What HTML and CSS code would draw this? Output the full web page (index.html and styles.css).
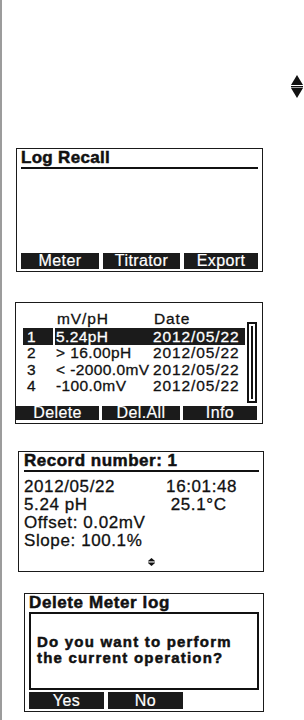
FILE: index.html
```html
<!DOCTYPE html>
<html lang="en">
<head>
  <meta charset="UTF-8">
  <meta name="viewport" content="width=device-width, initial-scale=1.0">
  <title>Log Recall screens</title>
  <link rel="stylesheet" href="styles.css">
</head>
<body>
  <div class="page">
    <!-- Up/down hint -->
    <div class="scroll-hint">
      <svg width="12" height="23" viewBox="0 0 12 23">
        <path d="M6 0 L12 10 L0 10 Z"/>
        <rect x="0" y="11" width="12" height="1.4"/>
        <path d="M0 13 L12 13 L6 23 Z"/>
      </svg>
    </div>

    <!-- Log Recall menu -->
    <section class="lcd lcd-menu">
      <h2 class="lcd-title">Log Recall</h2>
      <div class="softkeys">
        <span>Meter</span>
        <span>Titrator</span>
        <span>Export</span>
      </div>
    </section>

    <!-- Meter log list -->
    <section class="lcd lcd-list">
      <div class="list-body">
        <div class="log-list">
          <div class="log-head">
            <span class="col-val">mV/pH</span>
            <span class="col-date">Date</span>
          </div>
          <div class="log-row selected">
            <span class="col-no">1</span>
            <span class="col-main"><span class="col-val">5.24pH</span><span class="col-date">2012/05/22</span></span>
          </div>
          <div class="log-row">
            <span class="col-no">2</span>
            <span class="col-main"><span class="col-val">&gt; 16.00pH</span><span class="col-date">2012/05/22</span></span>
          </div>
          <div class="log-row">
            <span class="col-no">3</span>
            <span class="col-main"><span class="col-val">&lt; -2000.0mV</span><span class="col-date">2012/05/22</span></span>
          </div>
          <div class="log-row">
            <span class="col-no">4</span>
            <span class="col-main"><span class="col-val">-100.0mV</span><span class="col-date">2012/05/22</span></span>
          </div>
        </div>
        <div class="scrollbar"><div class="thumb"></div></div>
      </div>
      <div class="softkeys softkeys-list">
        <span>Delete</span>
        <span>Del.All</span>
        <span>Info</span>
      </div>
    </section>

    <!-- Record detail -->
    <section class="lcd lcd-record">
      <h2 class="lcd-title">Record number: 1</h2>
      <div class="record-lines">
        <div class="record-line"><span>2012/05/22</span><span class="right-a">16:01:48</span></div>
        <div class="record-line"><span>5.24 pH</span><span class="right-b">25.1°C</span></div>
        <div class="record-line"><span>Offset: 0.02mV</span></div>
        <div class="record-line"><span>Slope: 100.1%</span></div>
      </div>
      <div class="record-hint">
        <svg width="7" height="8" viewBox="0 0 7 8">
          <path d="M3.5 0 L7 3 L0 3 Z"/>
          <rect x="0" y="3.6" width="7" height="0.9"/>
          <path d="M0 5 L7 5 L3.5 8 Z"/>
        </svg>
      </div>
    </section>

    <!-- Delete confirmation -->
    <section class="lcd lcd-dialog">
      <h2 class="lcd-title plain">Delete Meter log</h2>
      <div class="dialog-box">
        <p class="dialog-line">Do you want to perform</p>
        <p class="dialog-line">the current operation?</p>
      </div>
      <div class="softkeys softkeys-dialog">
        <span>Yes</span>
        <span>No</span>
      </div>
    </section>
  </div>
</body>
</html>
```

FILE: styles.css
```css
body {
  margin: 0;
  background: #fff;
  color: #111;
  font-family: "Liberation Sans", Arial, sans-serif;
}

.page {
  box-sizing: border-box;
  min-height: 720px;
  border-left: 2px solid #9c9c9c;
}

.scroll-hint {
  display: flex;
  justify-content: flex-end;
  height: 73px;
  padding-top: 75px;
  padding-right: 1px;
}

.scroll-hint svg,
.record-hint svg {
  fill: #111;
}

/* Generic LCD screen frame */
.lcd {
  box-sizing: border-box;
  display: flex;
  flex-direction: column;
  border: 1px solid #1a1a1a;
  font-size: 17px;
  letter-spacing: 0.2px;
  -webkit-text-stroke: 0.3px currentColor;
}

.lcd-title {
  margin: 0;
  font-size: 17px;
  font-weight: bold;
  line-height: 18px;
  letter-spacing: 0.3px;
  border-bottom: 2px solid #111;
  -webkit-text-stroke: 0.5px currentColor;
}

.lcd-title.plain {
  border-bottom: none;
}

.softkeys {
  display: grid;
  grid-template-columns: 78px 77px 74px;
  gap: 4px;
  margin-top: auto;
  margin-bottom: 2px;
}

.softkeys span {
  background: #1b1b1b;
  color: #fff;
  text-align: center;
  font-size: 16px;
  line-height: 16px;
  letter-spacing: 0.4px;
  -webkit-text-stroke: 0.2px currentColor;
}

/* Screen 1 */
.lcd-menu {
  width: 247px;
  height: 124px;
  margin-left: 14px;
  padding: 0 4px;
}

/* Screen 2 */
.lcd-list {
  width: 248px;
  height: 122px;
  margin-top: 30px;
  margin-left: 13px;
  padding: 7px 4px 0 0;
}

.list-body {
  display: flex;
  gap: 2px;
  padding-left: 7px;
}

.log-list {
  width: 222px;
  font-size: 15.5px;
  letter-spacing: 0.9px;
}

.log-head {
  display: flex;
  line-height: 18px;
  padding-left: 34px;
}

.log-head .col-val {
  width: 97px;
}

.log-row {
  display: grid;
  grid-template-columns: 30px 190px;
  gap: 2px;
  line-height: 16.5px;
}

.log-row.selected {
  line-height: 17px;
  color: #fff;
}

.log-row.selected .col-no,
.log-row.selected .col-main {
  background: #1b1b1b;
}

.col-no {
  padding-left: 4px;
}

.col-main {
  display: flex;
  padding-left: 1px;
}

.col-main .col-val {
  width: 97px;
  white-space: nowrap;
  letter-spacing: 0.4px;
}

.scrollbar {
  box-sizing: border-box;
  width: 10px;
  height: 81px;
  margin-top: 12px;
  padding: 2px;
  border: 2px solid #111;
}

.thumb {
  height: 100%;
  background: #111;
}

.softkeys-list {
  grid-template-columns: 83px 78px 74px;
  gap: 3px;
  margin-bottom: 3px;
}

.softkeys-list span {
  line-height: 14px;
}

/* Screen 3 */
.lcd-record {
  width: 246px;
  height: 121px;
  margin-top: 27px;
  margin-left: 16px;
  padding: 0 4px 0 5px;
}

.lcd-record .lcd-title {
  letter-spacing: 0.5px;
}

.lcd-title + .record-lines {
  margin-top: 6px;
}

.record-lines {
  letter-spacing: 0.6px;
}

.record-line {
  display: flex;
  line-height: 18px;
}

.record-line .right-a {
  margin-left: 51px;
}

.record-line .right-b {
  margin-left: 83px;
}

.record-hint {
  display: flex;
  justify-content: center;
  margin-top: 8px;
  padding-left: 19px;
}

/* Screen 4 */
.lcd-dialog {
  width: 240px;
  height: 119px;
  margin-top: 21px;
  margin-left: 22px;
  padding: 0 4px;
}

.lcd-dialog .lcd-title {
  letter-spacing: 0.6px;
}

.dialog-box {
  box-sizing: border-box;
  height: 78px;
  border: 2px solid #111;
  padding: 20px 4px 0 6px;
}

.dialog-line {
  margin: 0;
  font-size: 15px;
  font-weight: bold;
  line-height: 16px;
  letter-spacing: 1.2px;
  -webkit-text-stroke: 0.5px currentColor;
}

.softkeys-dialog {
  grid-template-columns: 75px 75px;
  gap: 4px;
  margin-top: 2px;
}

.softkeys-dialog span {
  line-height: 17px;
}
```
